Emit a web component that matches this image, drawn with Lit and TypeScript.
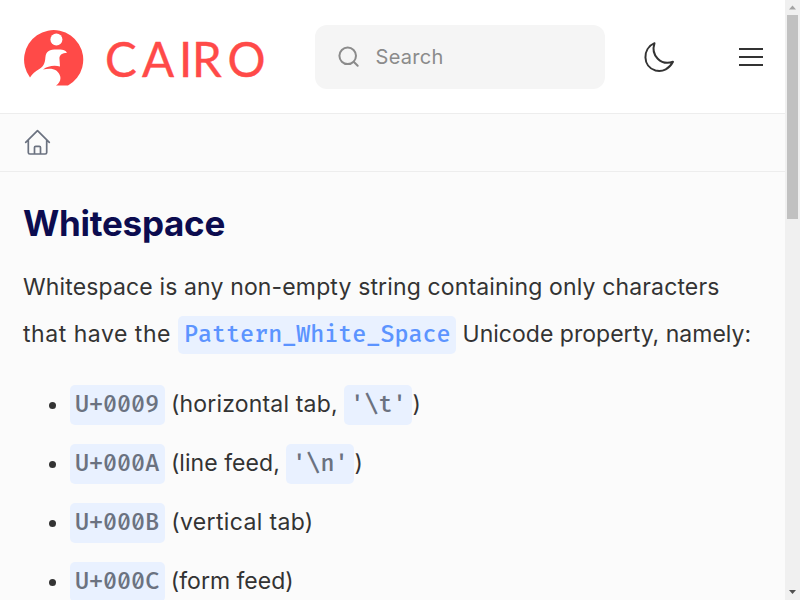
import { LitElement, html, css, nothing } from "lit";
import { customElement } from "lit/decorators.js";

interface Entry {
  code: string;
  before: string;
  spacing: number;
  escape?: string;
  after?: string;
}

const entries: Entry[] = [
  { code: "U+0009", before: " (horizontal tab, ", spacing: 0.17, escape: "'\\t'", after: ")" },
  { code: "U+000A", before: " (line feed, ", spacing: 0.05, escape: "'\\n'", after: ")" },
  { code: "U+000B", before: " (vertical tab)", spacing: 0.35 },
  { code: "U+000C", before: " (form feed)", spacing: 0 },
];

@customElement("site-header")
class SiteHeader extends LitElement {
  static styles = css`
    :host { display: flex; align-items: center; height: 113px; background: #fff; border-bottom: 1px solid #ededed; box-sizing: content-box; padding: 0 22px 0 23px; }
    .logo { display: block; width: 244px; height: 60px; margin-right: 48px; }
    .wordmark { font-family: Lato, sans-serif; font-size: 47.5px; fill: #ff4a48; stroke: #ff4a48; stroke-width: 0.4px; }
    .search { display: flex; align-items: center; width: 290px; height: 64px; border-radius: 12px; background: #f5f5f5; color: #8b8b8b; font-size: 20px; letter-spacing: 0.3px; box-sizing: border-box; padding-left: 22px; gap: 14.5px; }
    .search svg { display: block; }
    .moon { display: block; margin-left: 38px; }
    .menu { display: flex; flex-direction: column; gap: 6px; margin-left: auto; }
    .menu span { width: 24px; height: 2px; background: #333; }
  `;
  render() {
    return html`
      <svg class="logo" viewBox="0 0 244 60">
        <g transform="translate(-0.3 -0.7)">
          <path fill="#ff4a48" d="M7.300 51.200A29.600 29.600 0 1 1 45.300 59.300L33.300 59.300C37 56.500 38.300 53.500 37.500 50C35.500 43 29 41 20.300 43.300C25 39.800 31 38.700 37.300 40.200L36.700 31.800C37 28.500 39.500 27 44.300 26.500C42.500 23.700 40 23.300 34 23.300C27 23.300 23.500 24.500 22.700 31C22.300 37 21 40 17 42.500C12.500 45 9.500 48 7.300 51.200Z"/>
          <circle cx="33.700" cy="13.200" r="6" fill="#fff"/>
        </g>
        <text class="wordmark" y="49.800" x="82 119 156 169 204.500">CAIRO</text>
      </svg>
      <div class="search">
        <svg width="24" height="24" viewBox="0 0 24 24" fill="none" stroke="#8b8b8b" stroke-width="2" stroke-linecap="round"><circle cx="10.700" cy="10.800" r="8.300"/><path d="M16.900 17L20.700 20.800"/></svg>
        <span>Search</span>
      </div>
      <svg class="moon" width="34" height="34" viewBox="0 0 34 34" fill="none" stroke="#333" stroke-width="2" stroke-linejoin="round"><path d="M11.500 3.200C-1 8.500-.5 27 12.500 30.500C20 32.300 26.500 28.500 30 21.800C18 26 7.500 15.500 11.500 3.200Z"/></svg>
      <div class="menu"><span></span><span></span><span></span></div>
    `;
  }
}

@customElement("crumb-bar")
class CrumbBar extends LitElement {
  static styles = css`
    :host { display: flex; align-items: center; height: 57px; border-bottom: 1px solid #ededed; padding-left: 24px; }
    svg { display: block; }
  `;
  render() {
    return html`<svg width="27" height="27" viewBox="0 0 27 27" fill="none" stroke="#6b7280" stroke-width="1.700" stroke-linecap="round" stroke-linejoin="round"><path d="M1.700 13.300L13.500 1.700L25.300 13.300M4.300 11V23.500Q4.300 25 5.800 25H21.200Q22.700 25 22.700 23.500V11M10.500 25V18.500Q10.500 17.300 11.700 17.300H15.300Q16.500 17.300 16.500 18.500V25"/></svg>`;
  }
}

@customElement("scroll-rail")
class ScrollRail extends LitElement {
  static styles = css`
    :host { display: flex; flex-direction: column; align-items: center; width: 15px; background: #f0f0f0; }
    svg { display: block; width: 15px; height: 15px; }
    .thumb { width: 11px; height: 204px; background: #c1c1c1; }
    .down { margin-top: auto; }
  `;
  render() {
    return html`
      <svg viewBox="0 0 15 15"><path fill="#a3a3a3" d="M4 9.500L7.500 5.500L11 9.500Z"/></svg>
      <div class="thumb"></div>
      <svg class="down" viewBox="0 0 15 15"><path fill="#505050" d="M4 5L11 5L7.500 9Z"/></svg>
    `;
  }
}

@customElement("app-root")
class AppRoot extends LitElement {
  static styles = css`
    :host { display: flex; height: 600px; overflow: hidden; background: #fbfbfb; color: #333; font-family: Inter, sans-serif; }
    .page { width: 785px; height: 600px; overflow: hidden; }
    main { padding: 27px 23px 0; font-size: 23px; line-height: 47px; }
    h1 { margin: 0; font-size: 35px; line-height: 48px; font-weight: 700; color: #0c0c4f; letter-spacing: -0.27px; }
    p { margin: 17px 0 0; white-space: nowrap; letter-spacing: 0.14px; }
    .lead { letter-spacing: 0.53px; }
    .tail { letter-spacing: 0.02px; }
    ul { margin: 22px 0 0; padding: 0 0 0 47px; }
    li { height: 47px; margin-bottom: 12px; }
    code { font-family: "Fira Code", "Fira Mono", "Noto Sans Mono", monospace; font-size: 22.8px; font-weight: 500; letter-spacing: 0; padding: 6px 6px 6px 5px; border-radius: 5px; background: #e9f1ff; color: #6b7280; }
    .link { color: #5c94ff; padding: 5px 5.5px 5px 6px; }
    .escape { padding: 6px; }
    .note { margin-left: -0.8px; }
  `;
  render() {
    return html`
      <div class="page">
        <site-header></site-header>
        <crumb-bar></crumb-bar>
        <main>
          <h1>Whitespace</h1>
          <p>Whitespace is any non-empty string containing only characters<br /><span class="lead">that have the </span><code class="link">Pattern_White_Space</code><span class="tail"> Unicode property, namely:</span></p>
          <ul>
            ${entries.map((e) => html`<li><code>${e.code}</code><span class="note" style="letter-spacing:${e.spacing}px">${e.before}</span>${e.escape ? html`<code class="escape">${e.escape}</code>` : nothing}${e.after ?? nothing}</li>`)}
          </ul>
        </main>
      </div>
      <scroll-rail></scroll-rail>
    `;
  }
}
